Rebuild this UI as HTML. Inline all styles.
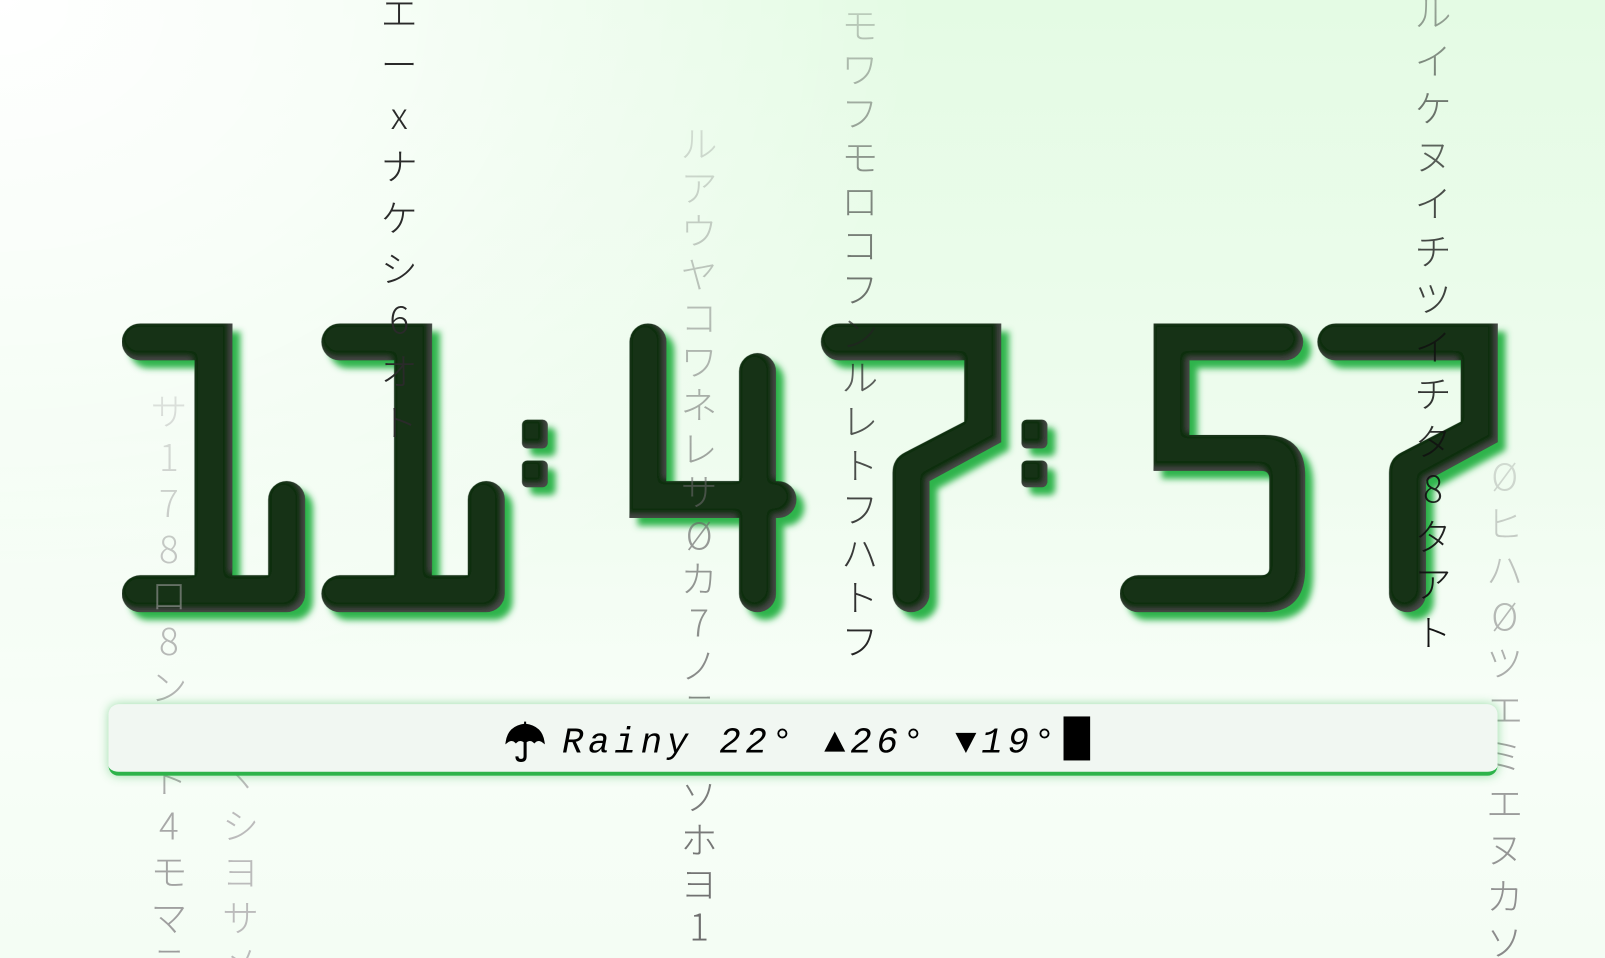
<!DOCTYPE html>
<html><head><meta charset="utf-8"><style>
html,body{margin:0;padding:0;width:1605px;height:958px;overflow:hidden;background:#fff}
#w{position:absolute;left:0;top:0;width:1568px;height:936px;transform:scale(1.02360,1.02350);transform-origin:0 0;
background:radial-gradient(ellipse 900px 700px at 0px 0px,#ffffff 0%,rgba(255,255,255,0.7) 40%,rgba(255,255,255,0) 100%),linear-gradient(180deg,#e4fbe4 0%,#eefcee 45%,#f8fef8 75%,#f4fdf4 100%);overflow:hidden}
.c{position:absolute;width:60px;text-align:center;font-family:"Noto Sans CJK JP",sans-serif;font-size:36px;font-weight:300;color:#333;z-index:2}
svg.m{position:absolute;left:0;top:0;z-index:1}
#bar{position:absolute;left:106px;top:688px;width:1357px;height:66px;background:#f1f7f2;border-bottom:4px solid #2db34a;border-radius:10px;box-shadow:0 0 10px rgba(45,179,74,.45);z-index:3}
#t{position:absolute;left:549px;top:700px;height:50px;font-family:"Liberation Mono","DejaVu Sans Mono",monospace;font-style:italic;font-size:35px;letter-spacing:4.6px;color:#000;white-space:nowrap;line-height:50px;z-index:4}
#u{position:absolute;left:493px;top:703px;z-index:4}
#cur{display:inline-block;width:26px;height:43px;background:#000;vertical-align:-8px;margin-left:4px}
</style></head><body><div id="w">
<div class="c" style="left:135px;top:378px;line-height:45px;color:#999;-webkit-mask-image:linear-gradient(#0004,#000a 40%,#000)">サ<br>1<br>7<br>8<br>ロ<br>8<br>ン<br>ト<br>ト<br>4<br>モ<br>マ<br>テ</div>
<div class="c" style="left:205px;top:738px;line-height:45px;color:#bbb">ヽ<br>シ<br>ヨ<br>サ<br>メ</div>
<div class="c" style="left:360px;top:-14px;line-height:50px;color:#2a2a2a">エ<br>ー<br>x<br>ナ<br>ケ<br>シ<br>6<br>オ<br>ト</div>
<div class="c" style="left:653px;top:118px;line-height:42.5px;color:#666;-webkit-mask-image:linear-gradient(#0003,#0009 40%,#000)">ル<br>ア<br>ウ<br>ヤ<br>コ<br>ワ<br>ネ<br>レ<br>サ<br>Ø<br>カ<br>7<br>ノ<br>テ<br>ヘ<br>ソ<br>ホ<br>ヨ<br>1<br>ヽ</div>
<div class="c" style="left:810px;top:2px;line-height:43px;color:#222;-webkit-mask-image:linear-gradient(#0003,#0008 30%,#000)">モ<br>ワ<br>フ<br>モ<br>ロ<br>コ<br>フ<br>ン<br>ル<br>レ<br>ト<br>フ<br>ハ<br>ト<br>フ</div>
<div class="c" style="left:1370px;top:-12px;line-height:46.5px;color:#111;-webkit-mask-image:linear-gradient(#0005,#000b 30%,#000)">ル<br>イ<br>ケ<br>ヌ<br>イ<br>チ<br>ツ<br>イ<br>チ<br>タ<br>8<br>タ<br>ア<br>ト</div>
<div class="c" style="left:1440px;top:442px;line-height:45.5px;color:#888;-webkit-mask-image:linear-gradient(#0004,#000a 40%,#000)">Ø<br>ヒ<br>ハ<br>Ø<br>ツ<br>エ<br>ミ<br>エ<br>ヌ<br>カ<br>ソ</div>
<svg class="m" width="1568" height="936" viewBox="0 0 1568 936">
<defs><filter id="s" x="-10%" y="-10%" width="130%" height="130%">
<feGaussianBlur in="SourceAlpha" stdDeviation="3" result="b"/>
<feOffset in="b" dx="8" dy="8" result="o"/>
<feFlood flood-color="#2fb44c"/><feComposite in2="o" operator="in" result="g"/>
<feGaussianBlur in="SourceAlpha" stdDeviation="2.5" result="ib"/>
<feOffset in="ib" dx="-3" dy="-3" result="io"/>
<feComposite in="SourceGraphic" in2="io" operator="out" result="edge"/>
<feFlood flood-color="#4a4a4a"/><feComposite in2="edge" operator="in" result="ec"/>
<feMerge><feMergeNode in="g"/><feMergeNode in="SourceGraphic"/><feMergeNode in="ec"/></feMerge>
</filter></defs>
<g fill="#143319" filter="url(#s)">
<path d="M137 316H227V562H262V488A18 18 0 0 1 298 488V580A18 18 0 0 1 280 598H137A18 18 0 0 1 137 562H190V352H137A18 18 0 0 1 137 316Z"/>
<path transform="translate(195,0)" d="M137 316H227V562H262V488A18 18 0 0 1 298 488V580A18 18 0 0 1 280 598H137A18 18 0 0 1 137 562H190V352H137A18 18 0 0 1 137 316Z"/>
<rect x="510" y="410" width="25" height="28" rx="5"/><rect x="510" y="450" width="25" height="26" rx="5"/>
<rect x="998" y="410" width="25" height="28" rx="5"/><rect x="998" y="450" width="25" height="26" rx="5"/>
<path d="M615 334A18 18 0 0 1 651 334V470H722V363A18 18 0 0 1 758 363V470H760A18 18 0 0 1 760 506H758V580A18 18 0 0 1 722 580V506H615Z"/>
<path d="M820 316H978V432L908 470V580A18 18 0 0 1 872 580V462Q872 448 884 442L942 412V352H820A18 18 0 0 1 820 316Z"/>
<path transform="translate(485,0)" d="M820 316H978V432L908 470V580A18 18 0 0 1 872 580V462Q872 448 884 442L942 412V352H820A18 18 0 0 1 820 316Z"/>
<path d="M1127 316H1255A18 18 0 0 1 1255 352H1162V425H1235Q1275 425 1275 465V555Q1275 598 1235 598H1112A18 18 0 0 1 1112 562H1232Q1240 562 1240 555V468Q1240 460 1232 460H1127Z"/>
</g>
</svg>
<svg id="u" width="40" height="42" viewBox="0 0 40 42"><path d="M20 2V5M2 22Q4 7 20 5Q36 7 38 22Q33 18 29 22Q25 18 20 22Q15 18 11 22Q7 18 2 22Z" fill="#000" stroke="#000" stroke-width="2"/><path d="M20 22V36Q20 40 16 40Q12 40 12 36" fill="none" stroke="#000" stroke-width="3"/></svg>
<div id="bar"></div>
<div id="t">Rainy 22° ▲26° ▼19°<span id="cur"></span></div>
</div></body></html>
